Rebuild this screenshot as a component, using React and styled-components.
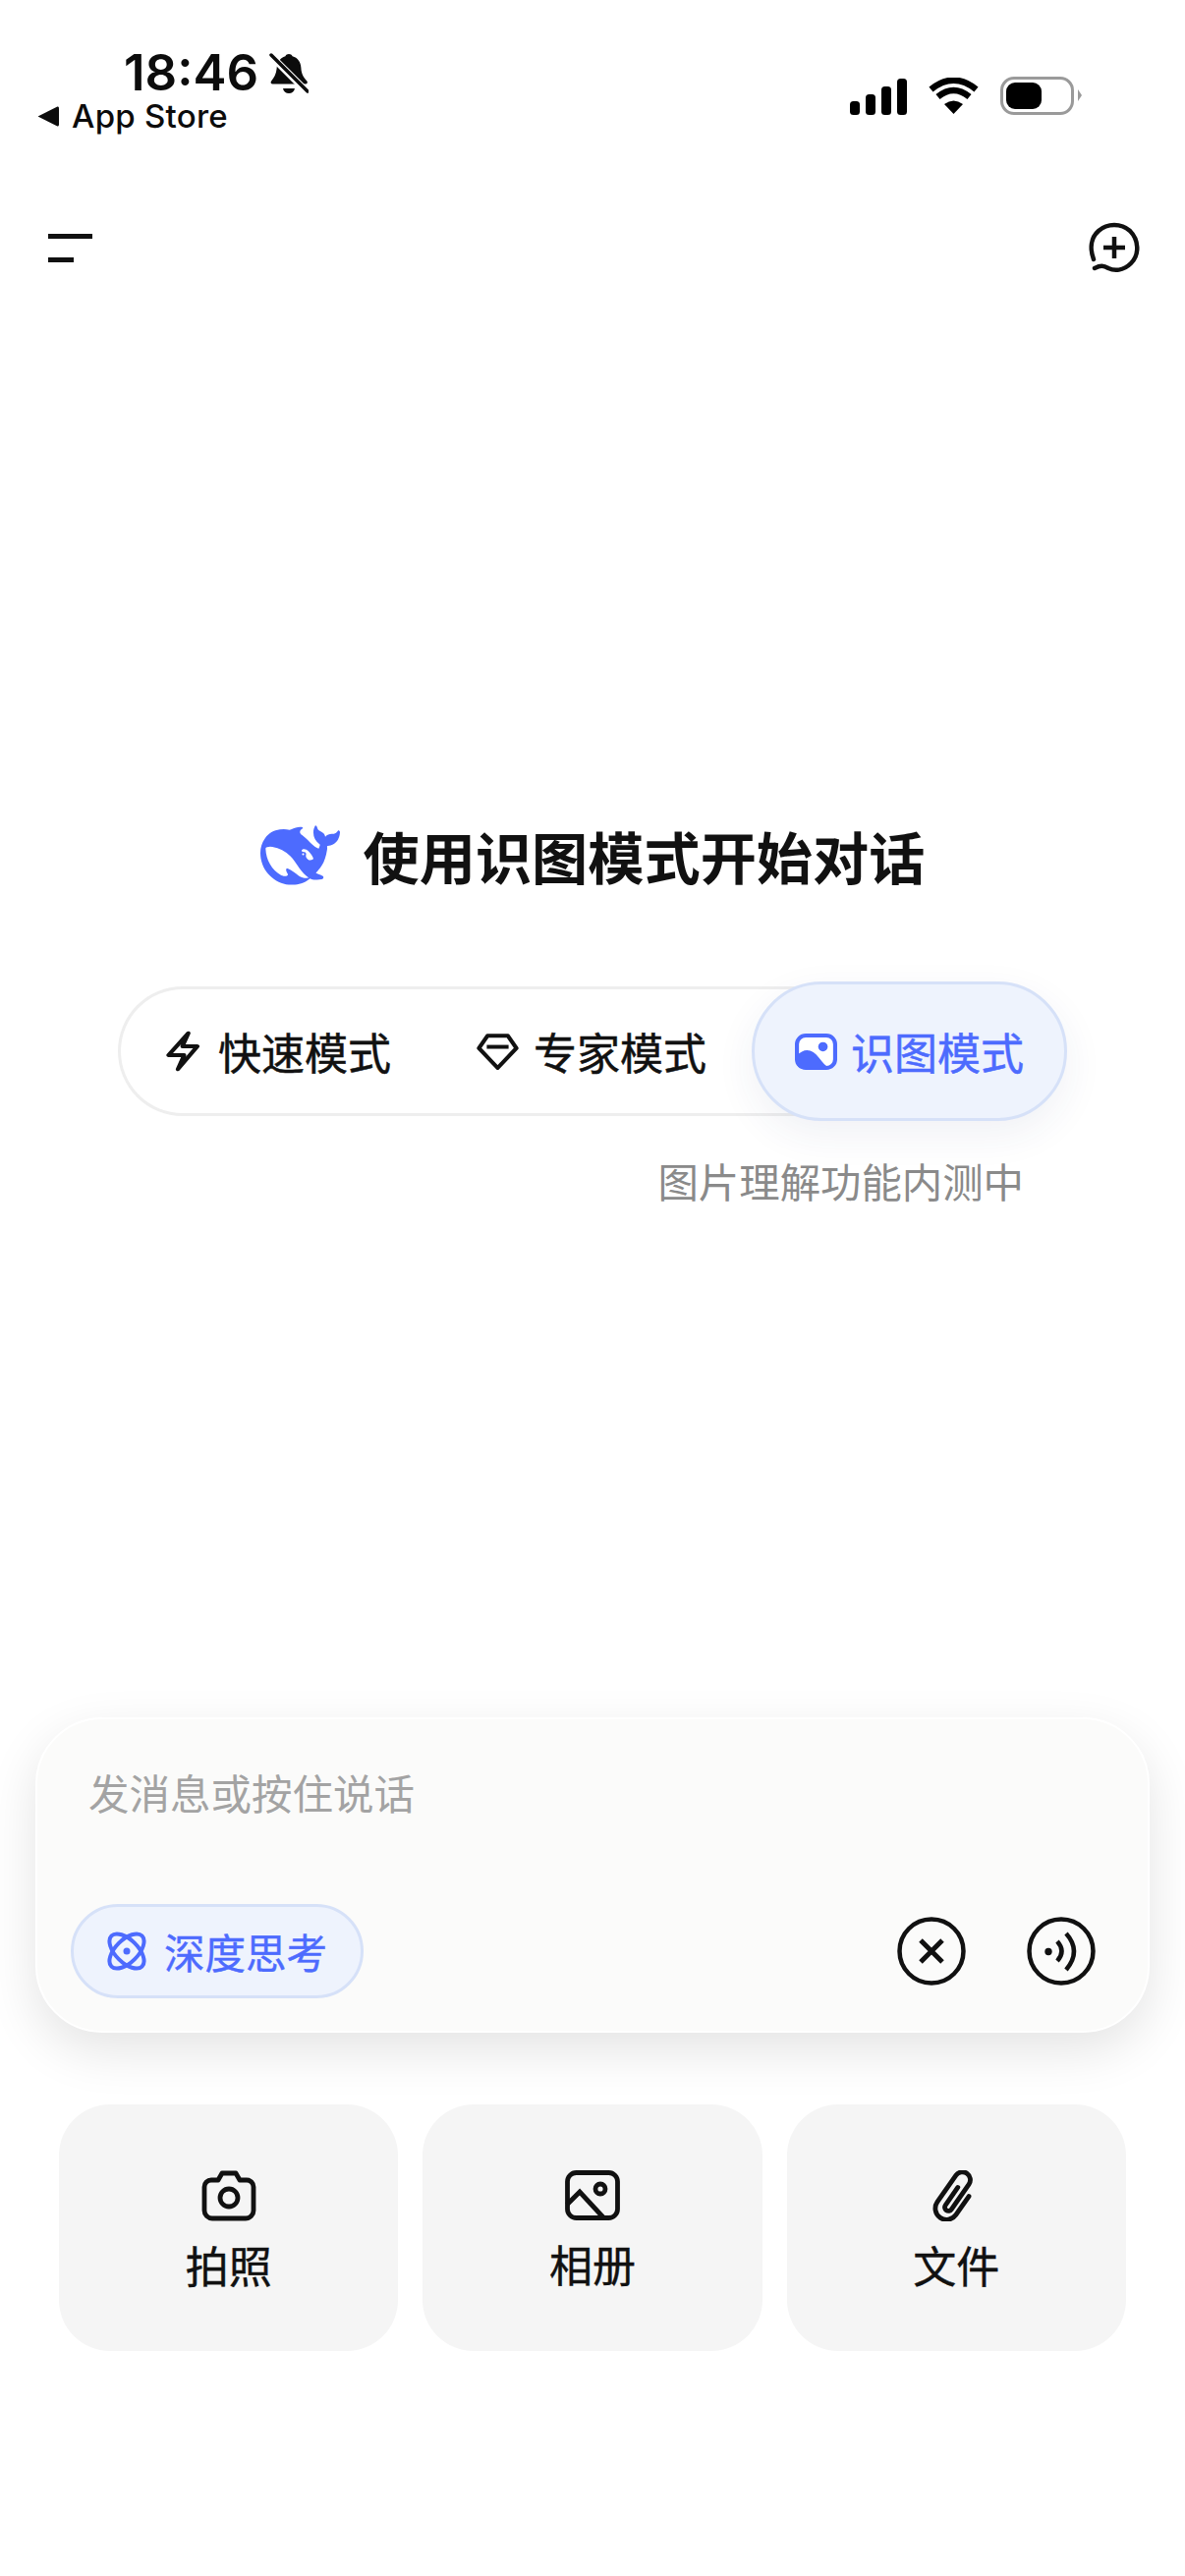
import React from "react";
import styled, { createGlobalStyle } from "styled-components";

const Global = createGlobalStyle`
  html, body { margin: 0; padding: 0; background: #fff; }
  * { box-sizing: border-box; }
`;
const cjk = `"Noto Sans CJK SC", "Noto Sans", sans-serif`;
const blue = "#4d6bfe";

const Page = styled.div`
  width: 1206px; height: 2622px; overflow: hidden; background: #fff;
  display: flex; flex-direction: column; font-family: ${cjk}; color: #111;
`;
const StatusBar = styled.div`
  height: 150px; padding: 0 113px 0 37px;
  display: flex; justify-content: space-between; align-items: flex-start;
`;
const StatusLeft = styled.div`display: flex; flex-direction: column; padding-top: 49px;`;
const TimeRow = styled.div`display: flex; align-items: center; gap: 11px; margin-left: 89px; height: 50px;`;
const Time = styled.span`font: 600 51px/50px Inter, sans-serif; color: #0c0c0c;`;
const BackRow = styled.div`display: flex; align-items: center; gap: 12px; height: 36px; margin-top: 1px;`;
const BackText = styled.span`font: 500 33px/36px Inter, sans-serif; letter-spacing: .25px; color: #0c0c0c;`;
const StatusRight = styled.div`display: flex; align-items: center; padding-top: 78px;`;
const Bars = styled.div`display: flex; align-items: flex-end; gap: 6px; height: 38px; margin-right: 22px;`;
const Bar = styled.i`display: block; width: 10px; height: ${p => p.$h}px; border-radius: 3.5px; background: #000;`;
const Battery = styled.div`
  position: relative; width: 75px; height: 39px; margin-left: 22px; padding: 3px;
  border: 3.5px solid #9a9a9a; border-radius: 14px;
  &::after { content: ""; position: absolute; right: -11px; top: 10px; border-left: 4px solid #9a9a9a; border-top: 6px solid transparent; border-bottom: 6px solid transparent; }
`;
const BatteryFill = styled.div`width: 36px; height: 100%; background: #000; border-radius: 9px;`;

const NavBar = styled.div`
  height: 60px; margin-top: 72px; padding: 0 46px 0 49px;
  display: flex; justify-content: space-between; align-items: center;
`;
const Menu = styled.div`display: flex; flex-direction: column; gap: 19px;`;
const MenuLine = styled.i`display: block; height: 5px; width: ${p => p.$w}px; background: #111;`;

const Hero = styled.div`
  margin-top: 553px; display: flex; flex-direction: column; align-items: center;
`;
const TitleRow = styled.div`display: flex; align-items: center; gap: 24px; height: 70px;`;
const Title = styled.h1`margin: 0; font: 700 57.2px/70px ${cjk}; color: #111; white-space: nowrap;`;
const ModeBar = styled.div`
  margin-top: 99px; width: 966px; height: 132px; padding: 0 0 0 46px;
  display: flex; align-items: center;
  border: 3px solid #eeeeee; border-right-color: transparent; border-radius: 66px; background: #fff;
`;
const Mode = styled.div`
  display: flex; align-items: center; gap: ${p => p.$gap}px; margin-left: ${p => p.$ml || 0}px;
  font: 400 44px/60px ${cjk}; color: #111; white-space: nowrap; -webkit-text-stroke: .5px #111;
`;
const ActiveMode = styled.div`
  display: flex; align-items: center; gap: 14px; width: 321px; height: 142px; padding-left: 41px;
  margin-left: auto; margin-right: -3px;
  background: #eef3fd; border: 3px solid #d6e1f8; border-radius: 71px;
  box-shadow: 0 14px 40px rgba(40, 60, 110, .07);
  font: 400 44px/60px ${cjk}; color: ${blue}; white-space: nowrap; -webkit-text-stroke: .5px ${blue};
`;
const Hint = styled.div`
  align-self: flex-end; margin: 37px 164px 0 0;
  font: 400 41.4px/56px ${cjk}; color: #8a8a8a; white-space: nowrap;
`;

const Composer = styled.div`
  margin: 519px 36px 0; height: 321px; padding: 44px 53px 33px 34px;
  display: flex; flex-direction: column; justify-content: space-between;
  background: #fbfbfa; border: 2px solid #fff; border-radius: 68px;
  box-shadow: 0 18px 52px rgba(0, 0, 0, .11);
`;
const Placeholder = styled.div`margin-left: 18px; font: 400 41.5px/60px ${cjk}; color: #a3a3a3; white-space: nowrap;`;
const ComposerRow = styled.div`display: flex; align-items: center; justify-content: space-between;`;
const ThinkChip = styled.div`
  display: flex; align-items: center; gap: 18px; width: 298px; height: 96px; padding-left: 34px;
  background: #eef3fd; border: 3px solid #d6e1f8; border-radius: 48px;
  font: 400 41.5px/60px ${cjk}; color: ${blue}; white-space: nowrap; -webkit-text-stroke: .4px ${blue};
`;
const RoundGroup = styled.div`display: flex; gap: 62px;`;

const Cards = styled.div`
  margin-top: 73px; padding: 0 60px;
  display: grid; grid-template-columns: repeat(3, 1fr); gap: 25px;
`;
const Card = styled.div`
  height: 251px; padding-top: 67px; border-radius: 52px; background: #f5f5f5;
  display: flex; flex-direction: column; align-items: center; gap: 14px;
  font: 400 44px/60px ${cjk}; color: #111; -webkit-text-stroke: .4px #111;
`;

const Triangle = () => (
  <svg width="24" height="23" viewBox="0 0 22 22"><path d="M1 11 L20 1.5 Q21.5 1 21.5 3 V19 Q21.5 21 20 20.5Z" fill="#0c0c0c" /></svg>
);
const BellOff = () => (
  <svg width="40" height="43" viewBox="0 0 40 43">
    <path d="M20 2c1.6 0 3 .8 3.6 2.2C29 5.5 32 10 32.4 16c.3 6 2.2 9.500 6 13.500 1 1.200.3 3-1.400 3H3.500c-1.800 0-2.500-1.800-1.400-3C5 26 7 22.500 7.600 17 8 11 11 5.500 16.400 4.200 17 2.800 18.400 2 20 2Z" fill="#0c0c0c" />
    <path d="M14 37h12c-.6 3.200-3 5-6 5s-5.400-1.800-6-5Z" fill="#0c0c0c" />
    <path d="M-1 1 L39 41" stroke="#fff" strokeWidth="7" />
    <path d="M2 3 L39 40" stroke="#0c0c0c" strokeWidth="3.500" strokeLinecap="round" />
  </svg>
);
const Wifi = () => (
  <svg width="51" height="37" viewBox="0 0 51 37">
    <path d="M25.500 37 L16 27 Q25.500 20 35 27Z" fill="#000" />
    <path d="M9.500 19.500 Q25.500 6.500 41.500 19.500" fill="none" stroke="#000" strokeWidth="6.500" />
    <path d="M2.500 12 Q25.500 -6.500 48.500 12" fill="none" stroke="#000" strokeWidth="6.500" />
  </svg>
);
const NewChat = () => (
  <svg width="52" height="52" viewBox="0 0 52 52" fill="none" stroke="#111">
    <path d="M5 38 C1 27 2 16 10 9 C19 1 33 1 42 9 C51 18 52 33 43 42 C35 50 26 50 20 47 C15 44 12 44 6 47" strokeWidth="4.500" strokeLinecap="round" />
    <path d="M26 15 V37 M15 26 H37" strokeWidth="4.500" />
  </svg>
);
const Whale = () => (
  <svg width="81" height="62" viewBox="0 2.600 24 18.200" preserveAspectRatio="none">
    <path fill={blue} d="M23.748 4.482c-.254-.124-.364.113-.512.234-.051.039-.094.09-.137.136-.372.397-.806.657-1.373.626-.829-.046-1.537.214-2.163.848-.133-.782-.575-1.248-1.247-1.548-.352-.156-.708-.311-.955-.65-.172-.241-.219-.51-.305-.774-.055-.16-.11-.323-.293-.35-.2-.031-.278.136-.356.276-.313.572-.434 1.202-.422 1.84.027 1.436.633 2.58 1.838 3.393.137.093.172.187.129.323-.082.28-.18.552-.266.833-.055.179-.137.217-.329.14a5.526 5.526 0 01-1.736-1.18c-.857-.828-1.631-1.742-2.597-2.458a11.365 11.365 0 00-.689-.471c-.985-.957.13-1.743.388-1.836.27-.098.093-.432-.779-.428-.872.004-1.67.295-2.687.684a3.055 3.055 0 01-.465.137 9.597 9.597 0 00-2.883-.102c-1.885.21-3.39 1.102-4.497 2.623C.082 8.606-.231 10.684.152 12.85c.403 2.284 1.569 4.175 3.36 5.653 1.858 1.533 3.997 2.284 6.438 2.14 1.482-.085 3.133-.284 4.994-1.86.47.234.962.327 1.78.397.63.059 1.236-.03 1.705-.128.735-.156.684-.837.419-.961-2.155-1.004-1.682-.595-2.113-.926 1.096-1.296 2.746-2.642 3.392-7.003.05-.347.007-.565 0-.845-.004-.17.035-.237.23-.256a4.173 4.173 0 001.545-.475c1.396-.763 1.96-2.015 2.093-3.517.02-.23-.004-.467-.247-.588zM11.581 18c-2.089-1.642-3.102-2.183-3.52-2.16-.392.024-.321.471-.235.763.09.288.207.486.371.739.114.167.192.416-.113.603-.673.416-1.842-.14-1.897-.167-1.361-.802-2.5-1.86-3.301-3.307-.774-1.393-1.224-2.887-1.298-4.482-.02-.386.093-.522.477-.592a4.696 4.696 0 011.529-.039c2.132.312 3.946 1.265 5.468 2.774.868.86 1.525 1.887 2.202 2.891.72 1.066 1.494 2.082 2.48 2.914.348.292.625.514.891.677-.802.09-2.14.11-3.054-.614zm1-6.44a.306.306 0 01.415-.287.302.302 0 01.2.288.306.306 0 01-.31.307.303.303 0 01-.304-.308zm3.11 1.596c-.2.081-.399.151-.59.16a1.245 1.245 0 01-.798-.254c-.274-.23-.47-.358-.552-.758a1.73 1.730 0 01.016-.588c.07-.327-.008-.537-.239-.727-.187-.156-.426-.199-.688-.199a.559.559 0 01-.254-.078c-.11-.054-.2-.19-.114-.358.028-.054.16-.186.192-.21.356-.202.767-.136 1.146.016.352.144.618.408 1.001.782.391.451.462.576.685.914.176.265.336.537.445.848.067.195-.019.354-.25.452z" />
  </svg>
);
const Bolt = () => (
  <svg width="34" height="42" viewBox="198 210 96 126" preserveAspectRatio="none" fill="none" stroke="#111" strokeWidth="12" strokeLinejoin="round">
    <path d="M262 218 L205 285 H250 L232 328 L288 258 H245 Z" />
  </svg>
);
const Gem = () => (
  <svg width="43" height="37" viewBox="1120 215 124 112" preserveAspectRatio="none" fill="none" stroke="#111" strokeWidth="12" strokeLinejoin="round">
    <path d="M1152 222 H1212 L1237 260 L1182 321 L1127 260 Z" />
    <path d="M1150 256 H1214" />
  </svg>
);
const ImageSolid = () => (
  <svg width="43" height="37" viewBox="0 0 125 110" preserveAspectRatio="none">
    <rect x="6" y="6" width="113" height="98" rx="26" fill="#fff" stroke={blue} strokeWidth="12" />
    <path d="M4 68 C30 40 52 48 72 74 C82 88 92 98 104 106 H28 Q4 106 4 84 Z" fill={blue} />
    <circle cx="83" cy="40" r="14" fill={blue} />
  </svg>
);
const Atom = () => (
  <svg width="40" height="40" viewBox="0 0 40 40" fill="none" stroke={blue} strokeWidth="4">
    <ellipse cx="20" cy="20" rx="22" ry="11.500" transform="rotate(45 20 20)" />
    <ellipse cx="20" cy="20" rx="22" ry="11.500" transform="rotate(-45 20 20)" />
    <circle cx="20" cy="20" r="3.500" fill={blue} stroke="none" />
  </svg>
);
const Close = () => (
  <svg width="70" height="70" viewBox="0 0 70 70" fill="none" stroke="#111" strokeWidth="4.500">
    <circle cx="35" cy="35" r="32.500" />
    <path d="M24 24 L46 46 M46 24 L24 46" strokeWidth="5" />
  </svg>
);
const Voice = () => (
  <svg width="70" height="70" viewBox="0 0 70 70" fill="none" stroke="#111">
    <circle cx="35" cy="35" r="32.500" strokeWidth="4.500" />
    <circle cx="22" cy="35.500" r="3.700" fill="#111" stroke="none" />
    <path d="M31 25 Q40 35 31 45" strokeWidth="4.500" />
    <path d="M40 17 Q56 35 40 54" strokeWidth="4.500" />
  </svg>
);
const Camera = () => (
  <svg width="56" height="52" viewBox="0 0 56 52" fill="none" stroke="#111" strokeWidth="4.800" strokeLinejoin="round">
    <path d="M3 17 a7 7 0 0 1 7-7 h7 l4-7 h14 l4 7 h7 a7 7 0 0 1 7 7 v24 a8 8 0 0 1-8 8 H11 a8 8 0 0 1-8-8 Z" />
    <circle cx="28" cy="28" r="9" />
  </svg>
);
const Gallery = () => (
  <svg width="56" height="51" viewBox="0 0 56 51" fill="none" stroke="#111" strokeWidth="4.800">
    <rect x="2.500" y="2.500" width="51" height="46" rx="9" />
    <circle cx="36" cy="19" r="5" />
    <path d="M2 35 L15 22 L39 48" />
  </svg>
);
const Clip = () => (
  <svg width="56" height="52" viewBox="-28 -26 56 52" fill="none" stroke="#111" strokeWidth="4.800" strokeLinecap="round">
    <g transform="rotate(35)">
      <path d="M11 -7 V16 a11.500 11.500 0 0 1 -23 0 V-17 a8 8 0 0 1 16 0 V14 a3.700 3.700 0 0 1 -7.400 0 V-8" />
    </g>
  </svg>
);

export default function App() {
  return (
    <Page>
      <Global />
      <StatusBar>
        <StatusLeft>
          <TimeRow><Time>18:46</Time><BellOff /></TimeRow>
          <BackRow><Triangle /><BackText>App Store</BackText></BackRow>
        </StatusLeft>
        <StatusRight>
          <Bars>{[14, 21, 29, 37].map(h => <Bar key={h} $h={h} />)}</Bars>
          <Wifi />
          <Battery><BatteryFill /></Battery>
        </StatusRight>
      </StatusBar>
      <NavBar>
        <Menu><MenuLine $w={45} /><MenuLine $w={26} /></Menu>
        <NewChat />
      </NavBar>
      <Hero>
        <TitleRow><Whale /><Title>使用识图模式开始对话</Title></TitleRow>
        <ModeBar>
          <Mode $gap={19}><Bolt />快速模式</Mode>
          <Mode $gap={15} $ml={87}><Gem />专家模式</Mode>
          <ActiveMode><ImageSolid />识图模式</ActiveMode>
        </ModeBar>
        <Hint>图片理解功能内测中</Hint>
      </Hero>
      <Composer>
        <Placeholder>发消息或按住说话</Placeholder>
        <ComposerRow>
          <ThinkChip><Atom />深度思考</ThinkChip>
          <RoundGroup><Close /><Voice /></RoundGroup>
        </ComposerRow>
      </Composer>
      <Cards>
        <Card><Camera />拍照</Card>
        <Card><Gallery />相册</Card>
        <Card><Clip />文件</Card>
      </Cards>
    </Page>
  );
}
